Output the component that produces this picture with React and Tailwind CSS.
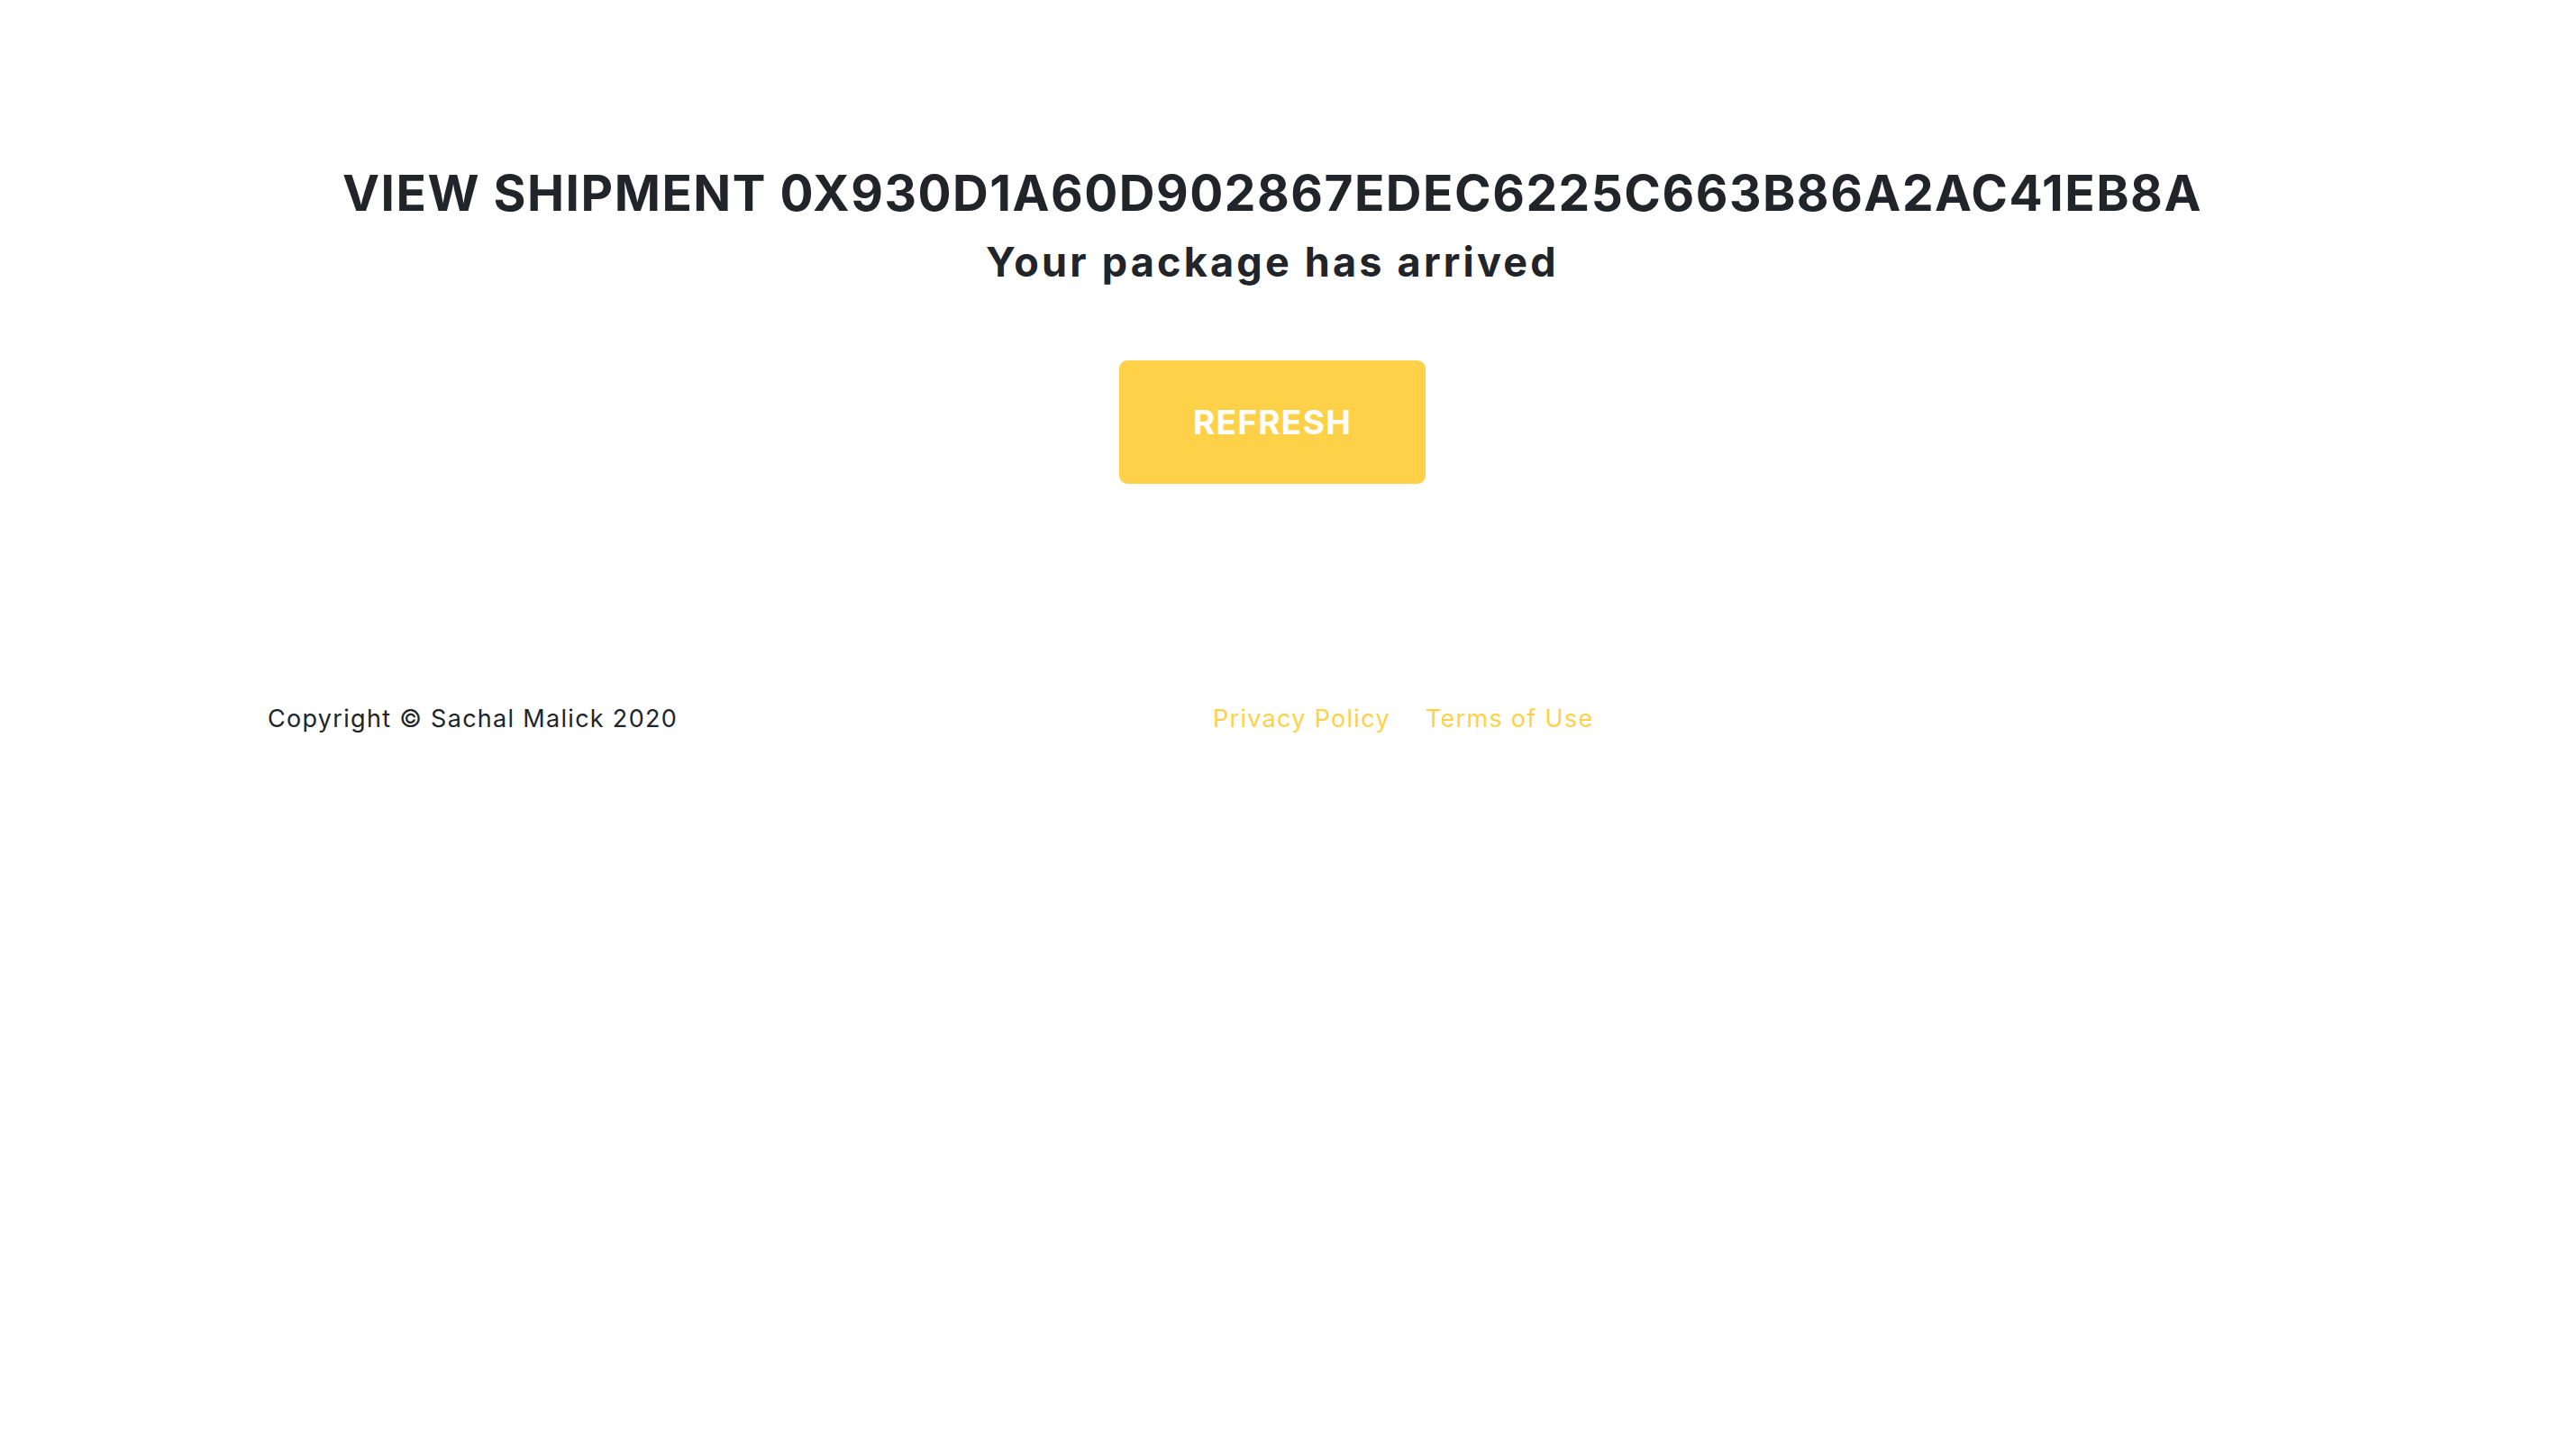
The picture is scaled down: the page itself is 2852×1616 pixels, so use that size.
export default function App() {
  return (
    <div className="min-h-screen bg-white pr-[28px] font-['Inter','Liberation_Sans',sans-serif] text-[#212529]">
      {/* Shipment status */}
      <main className="flex flex-col items-center pt-[181px]">
        <h1 className="text-[55px] font-bold leading-[1.2] uppercase tracking-[1.5px]">
          View Shipment 0x930d1a60d902867edec6225c663b86a2ac41eb8a
        </h1>
        <h2 className="mt-[17px] text-[45px] font-bold leading-[1.2] tracking-[3.2px]">
          Your package has arrived
        </h2>
        <button className="mt-[82px] w-[340px] h-[137px] rounded-[9px] bg-[#ffd149] text-white text-[37px] font-bold uppercase tracking-[1.3px]">
          Refresh
        </button>
      </main>

      {/* Footer */}
      <footer className="mx-auto mt-[241px] flex w-[2230px] text-[27px] leading-normal tracking-[1.3px]">
        <p className="w-[1049px]">Copyright © Sachal Malick 2020</p>
        <div className="flex gap-[39px]">
          <a href="#" className="text-[#ffd149]">Privacy Policy</a>
          <a href="#" className="text-[#ffd149]">Terms of Use</a>
        </div>
      </footer>
    </div>
  )
}
